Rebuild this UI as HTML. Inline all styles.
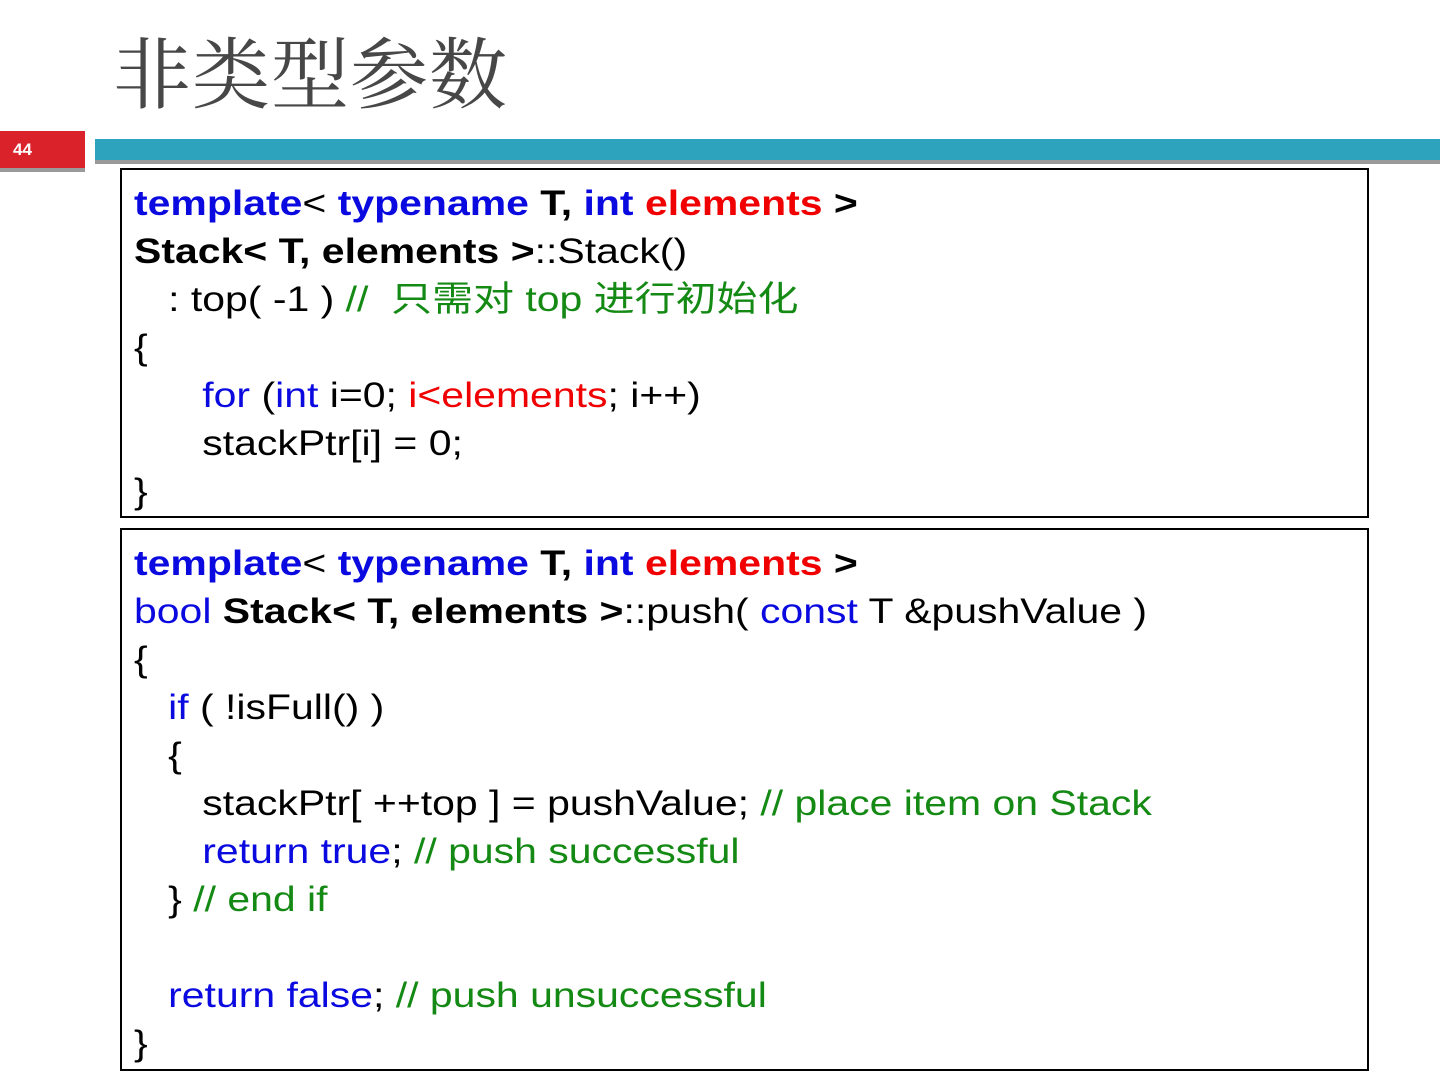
<!DOCTYPE html>
<html><head><meta charset="utf-8"><style>
body{margin:0;width:1440px;height:1080px;background:#fff;position:relative;overflow:hidden;font-family:"Liberation Sans","Noto Sans CJK SC",sans-serif;}
.title{position:absolute;left:113px;top:30px;font-family:"Noto Serif CJK SC","Liberation Serif",serif;font-size:78px;color:#474747;letter-spacing:1px;line-height:1;}
.num{position:absolute;left:0;top:131px;width:85px;height:37px;background:#d9222a;color:#fff;font-size:17px;font-weight:bold;box-shadow:0 4px 0 #9a9a9a;}
.num span{position:absolute;left:13px;top:9px;}
.bar{position:absolute;left:95px;top:139px;width:1345px;height:21px;background:#2ea3bd;box-shadow:0 4px 0 #9a9a9a;}
.box{position:absolute;left:120px;width:1245px;border:2px solid #000;background:#fff;}
.l{position:absolute;left:12px;font-size:35px;line-height:48px;white-space:pre;color:#000;transform:scaleX(1.17);transform-origin:0 0;}
.b{color:#0a0ae0}.r{color:#f00000}.g{color:#148a14}.k{font-weight:bold}.n{font-weight:normal}
.cj{display:inline-block;transform:scaleX(0.9);transform-origin:0 0;}
</style></head><body>
<div class="title">非类型参数</div>
<div class="num"><span>44</span></div>
<div class="bar"></div>
<div class="box" style="top:168px;height:346px;">
<div class="l k" style="top:10px"><span class="b">template</span><span class="n">&lt;</span> <span class="b">typename</span> T, <span class="b">int</span> <span class="r">elements</span> &gt;</div>
<div class="l" style="top:58px"><b>Stack&lt; T, elements &gt;</b>::Stack()</div>
<div class="l" style="top:106px">   : top( -1 ) <span class="g">//  只需对 top 进行初始化</span></div>
<div class="l" style="top:154px">{</div>
<div class="l" style="top:202px">      <span class="b">for</span> (<span class="b">int</span> i=0; <span class="r">i&lt;elements</span>; i++)</div>
<div class="l" style="top:250px">      stackPtr[i] = 0;</div>
<div class="l" style="top:298px">}</div>
</div>
<div class="box" style="top:528px;height:539px;">
<div class="l k" style="top:10px"><span class="b">template</span><span class="n">&lt;</span> <span class="b">typename</span> T, <span class="b">int</span> <span class="r">elements</span> &gt;</div>
<div class="l" style="top:58px"><span class="b">bool</span> <b>Stack&lt; T, elements &gt;</b>::push( <span class="b">const</span> T &amp;pushValue )</div>
<div class="l" style="top:106px">{</div>
<div class="l" style="top:154px">   <span class="b">if</span> ( !isFull() )</div>
<div class="l" style="top:202px">   {</div>
<div class="l" style="top:250px">      stackPtr[ ++top ] = pushValue; <span class="g">// place item on Stack</span></div>
<div class="l" style="top:298px">      <span class="b">return true</span>; <span class="g">// push successful</span></div>
<div class="l" style="top:346px">   } <span class="g">// end if</span></div>
<div class="l" style="top:442px">   <span class="b">return false</span>; <span class="g">// push unsuccessful</span></div>
<div class="l" style="top:490px">}</div>
</div>
</body></html>
